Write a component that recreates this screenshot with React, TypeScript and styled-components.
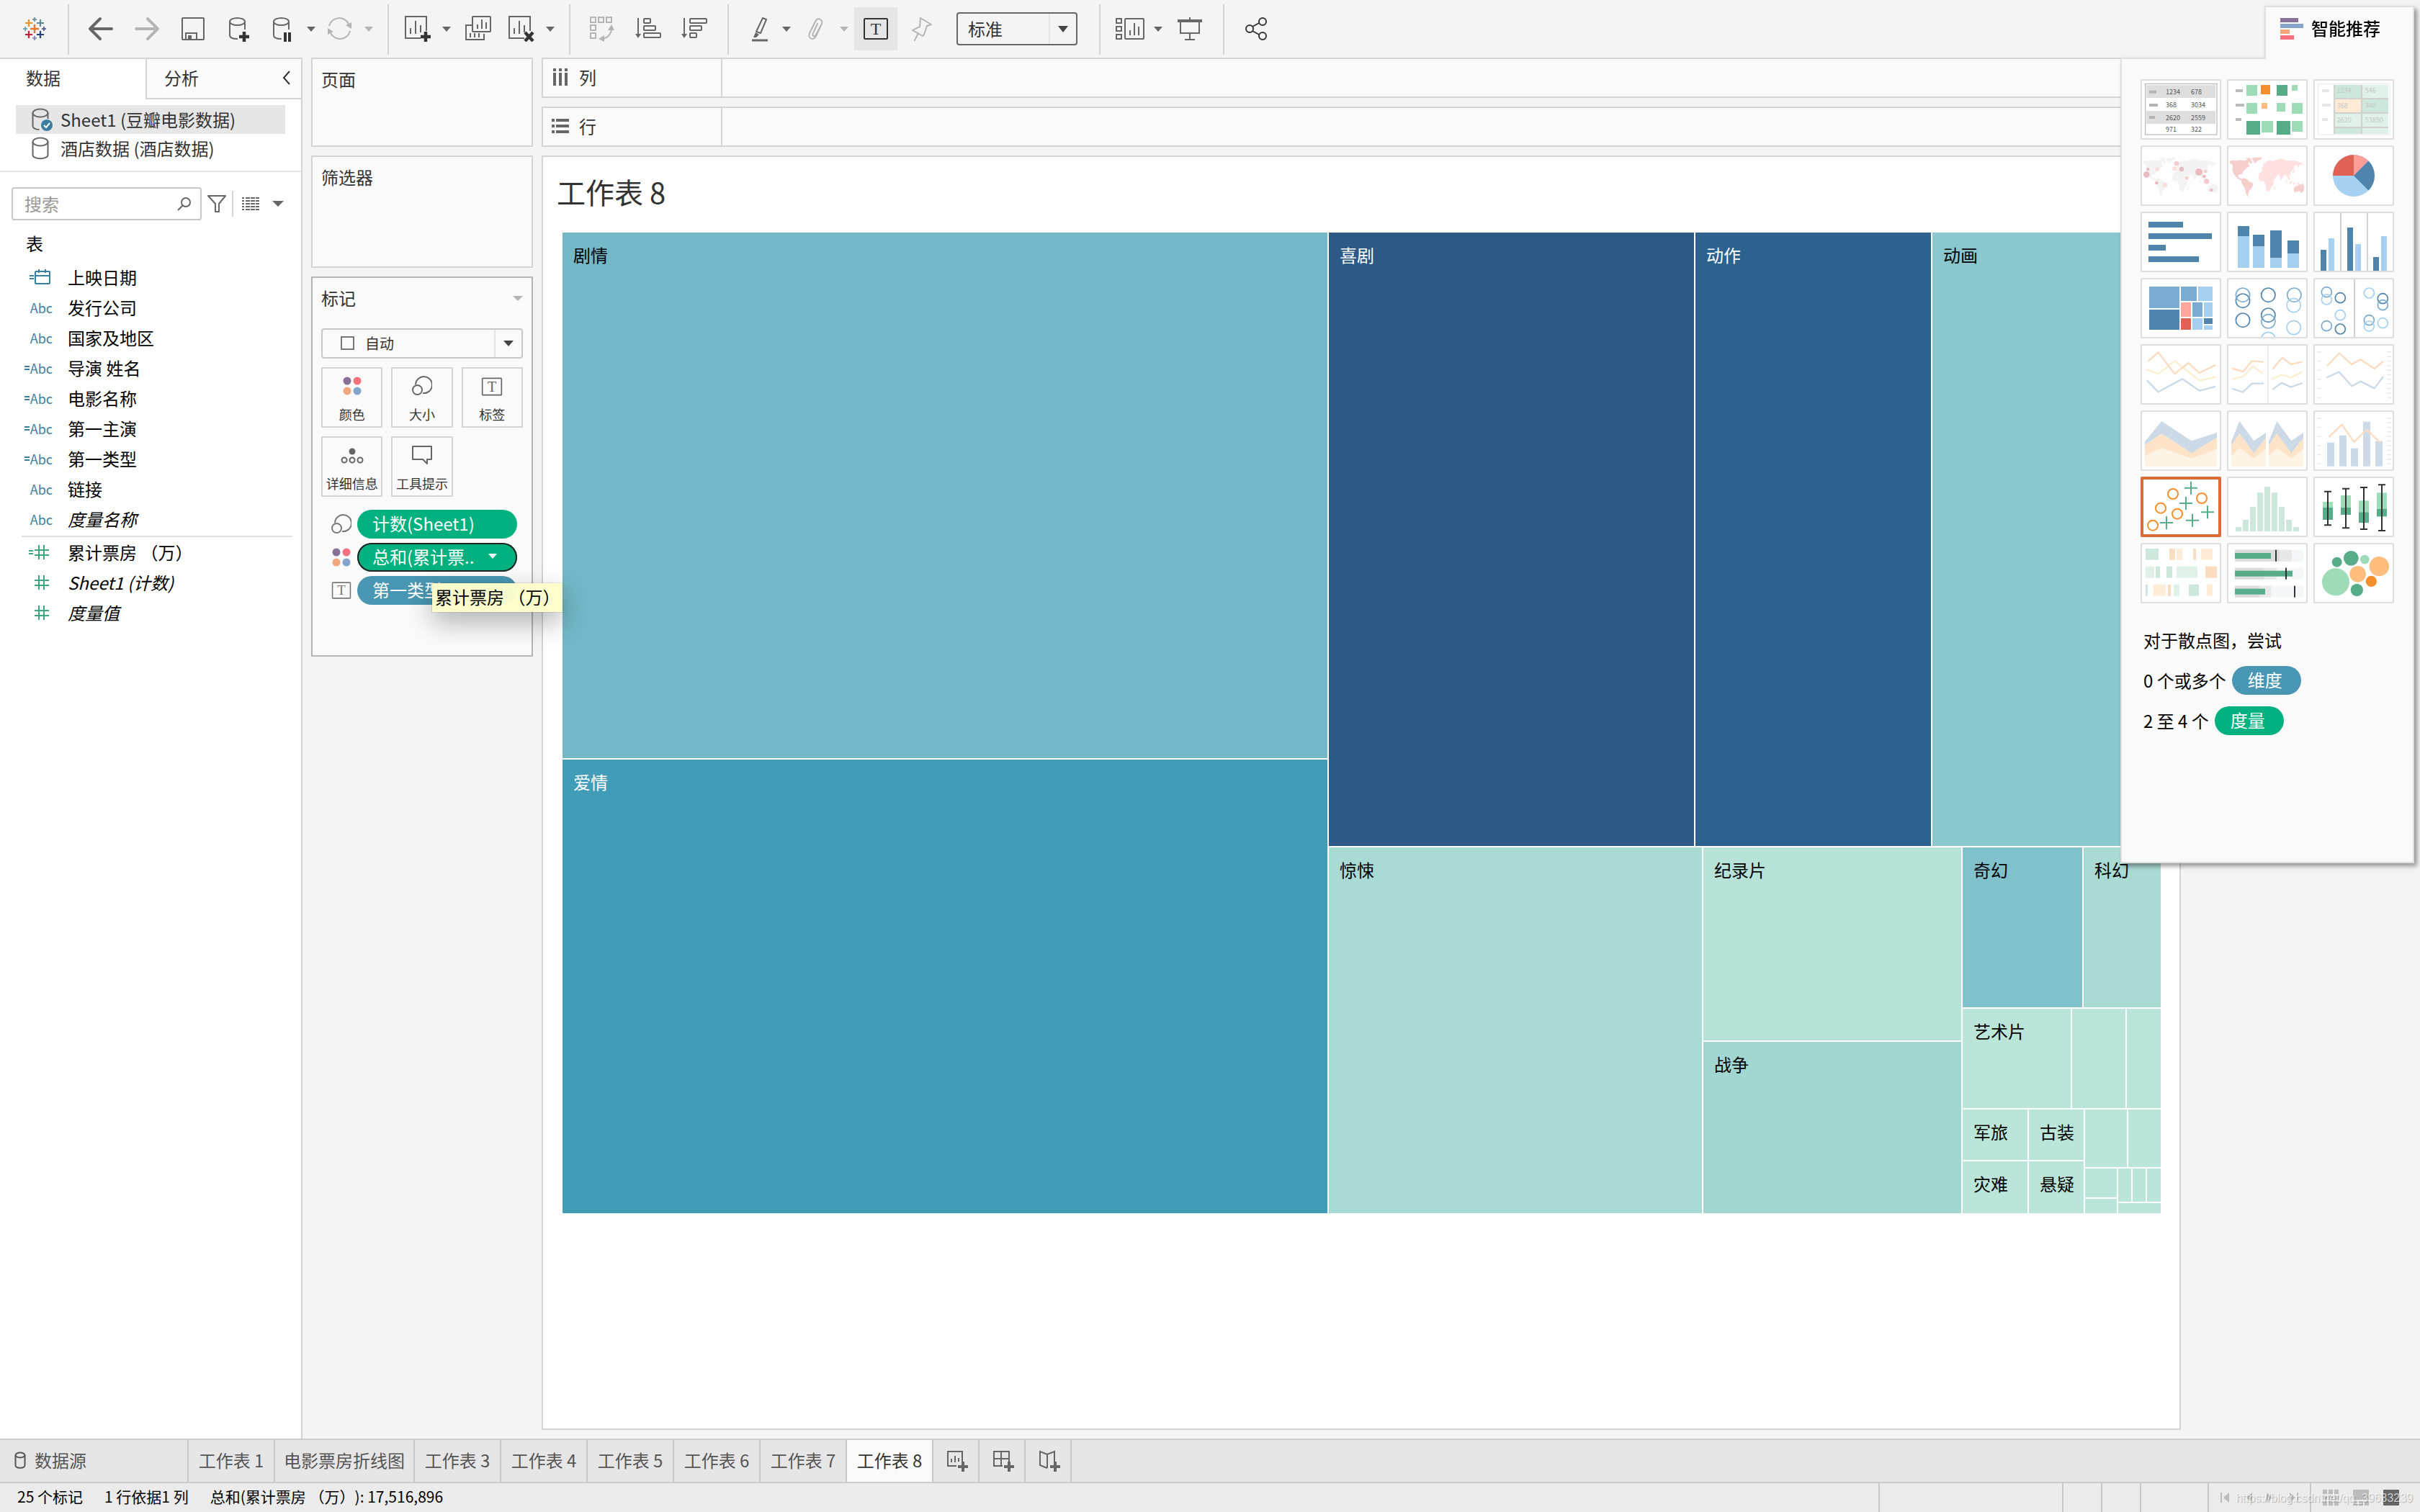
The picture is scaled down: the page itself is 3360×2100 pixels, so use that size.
import React from "react";
import styled, { createGlobalStyle, css } from "styled-components";

const Global = createGlobalStyle`
  *, *::before, *::after { box-sizing: border-box; }
  body { margin: 0; background: #f4f4f4; text-spacing-trim: space-all; }
  body, button, input, select {
    font-family: "Noto Sans CJK SC", "Noto Sans", sans-serif;
    font-size: 24px;
    line-height: 36px;
    color: #333;
  }
  button { border: 0; padding: 0; background: none; cursor: pointer; }
  h1, h2, p, ul { margin: 0; padding: 0; font-weight: 400; list-style: none; }
  svg { display: block; flex: none; }
`;

const line = "#d4d4d4";
const dark = "#4f84ad";
const mid = "#7babd0";
const light = "#a5d0f0";
const green = "#57ad8a";
const mint = "#9edcb8";

/* ---------- page frame ---------- */

const Page = styled.div`
  position: relative;
  display: flex;
  flex-direction: column;
  min-height: 100vh;
  overflow: hidden;
`;
const Main = styled.main`
  flex: 1;
  display: flex;
  gap: 12px;
`;

/* ---------- toolbar ---------- */

const Toolbar = styled.header`
  display: flex;
  align-items: stretch;
  height: 80px;
`;
const ToolGroup = styled.div<{ $last?: boolean }>`
  position: relative;
  display: flex;
  align-items: center;
  padding: 0 16px 0 12px;
  &::after {
    content: "";
    display: ${(p) => (p.$last ? "none" : "block")};
    position: absolute;
    right: 0;
    top: 6px;
    bottom: 4px;
    width: 2px;
    background: ${line};
  }
`;
const LogoGroup = styled(ToolGroup)`
  padding: 0;
  width: 96px;
  justify-content: center;
`;
const ToolButton = styled.button<{ $split?: boolean; $off?: boolean }>`
  display: grid;
  place-items: center;
  width: ${(p) => (p.$split ? 56 : 64)}px;
  height: 60px;
  color: ${(p) => (p.$off ? "#b4b4b4" : "#666")};
`;
const ActiveTool = styled(ToolButton)`
  width: 60px;
  margin: 0 2px;
  background: #e6e6e6;
  color: #333;
`;
const CaretButton = styled.button<{ $off?: boolean }>`
  display: grid;
  place-items: center;
  width: 24px;
  height: 60px;
  color: ${(p) => (p.$off ? "#b4b4b4" : "#666")};
`;
const SelectFrame = styled.label<{ $strong?: boolean }>`
  display: flex;
  align-items: stretch;
  border: 2px solid ${(p) => (p.$strong ? "#666" : "#c8c8c8")};
  border-radius: 4px;
  ${(p) =>
    p.$strong
      ? css`width: 168px; height: 46px; margin: 0 16px;`
      : css`width: 100%; height: 42px; margin: 24px 0 12px;`}
  select {
    flex: 1;
    min-width: 0;
    appearance: none;
    border: 0;
    outline: 0;
    background: transparent;
    color: #333;
    line-height: 32px;
    font-size: ${(p) => (p.$strong ? 24 : 20)}px;
    padding: 0 14px;
  }
`;
const SelectIcon = styled.span`
  display: grid;
  place-items: center;
  padding-left: 25px;
`;
const SelectCaret = styled.span`
  display: grid;
  place-items: center;
  width: 38px;
  border-left: 2px solid #e4e4e4;
  color: #444;
`;

const I = ({ children, w = 36, h = 36, vb }: any) => (
  <svg width={w} height={h} viewBox={vb || `0 0 ${w} ${h}`} fill="none" stroke="currentColor" strokeWidth="2" aria-hidden="true">
    {children}
  </svg>
);
const Caret = ({ w = 12, h = 7 }: { w?: number; h?: number }) => (
  <svg width={w} height={h} viewBox="0 0 12 7" preserveAspectRatio="none" aria-hidden="true">
    <path d="M0 0h12L6 7z" fill="currentColor" />
  </svg>
);
const Plus = ({ x, y, s, w, c }: any) => <path d={`M${x - s} ${y}h${s * 2}M${x} ${y - s}v${s * 2}`} stroke={c} strokeWidth={w} />;

const Logo = () => (
  <I>
    <Plus x={18} y={18} s={6} w={2.4} c="#e8762c" />
    <Plus x={10} y={10} s={5} w={2.2} c="#eb9129" />
    <Plus x={26} y={10} s={5} w={2.2} c="#5b879b" />
    <Plus x={10} y={26} s={5} w={2.2} c="#c72035" />
    <Plus x={26} y={26} s={5} w={2.2} c="#1f447e" />
    <Plus x={18} y={5} s={3} w={2} c="#7099a6" />
    <Plus x={18} y={31} s={3} w={2} c="#8b94b8" />
    <Plus x={5} y={18} s={3} w={2} c="#7ba5b3" />
    <Plus x={31} y={18} s={3} w={2} c="#5c6692" />
  </I>
);
const Arrow = ({ flip }: { flip?: boolean }) => (
  <I>
    <path transform={flip ? "matrix(-1 0 0 1 36 0)" : undefined} d="M17 4 3 18l14 14M3 18h30" strokeWidth="4" strokeLinecap="round" strokeLinejoin="round" />
  </I>
);
const Save = () => (
  <I>
    <rect x="3" y="3" width="30" height="30" rx="1" />
    <path d="M8 33v-9h15v9" />
    <path d="M11 27h5v6h-5z" fill="currentColor" stroke="none" />
  </I>
);
const Cylinder = () => (
  <>
    <ellipse cx="15.500" cy="8" rx="10.500" ry="5" />
    <path d="M5 8v19c0 3 4 5 11 5M26 8v11" />
  </>
);
const AddData = () => (<I><Cylinder /><Plus x={25} y={29} s={7} w={4.5} c="#333" /></I>);
const PauseData = () => (<I><g transform="translate(1 0)"><Cylinder /></g><path d="M22 23v13M28 23v13" stroke="#333" strokeWidth="4" /></I>);
const Refresh = () => (
  <I>
    <path d="M3 14a14.500 14.500 0 0 1 27-3M32 21a14.500 14.500 0 0 1-27 3" />
    <path d="M34 9v9l-8-5zM1 17v9l8-4z" fill="currentColor" stroke="none" />
  </I>
);
const SheetShape = () => <path d="M22 31H1V1h29v20M8 17v8M15 7v18M22 13v10" />;
const NewSheet = () => (<I><SheetShape /><Plus x={29} y={29} s={7} w={4.5} c="#333" /></I>);
const ClearSheet = () => (<I><SheetShape /><path d="M23 23l11 12M34 23 23 35" stroke="#333" strokeWidth="4.500" /></I>);
const Duplicate = () => (<I><rect x="10" y="1" width="25" height="21" rx="1" /><path d="M10 13H1v20h25v-8M17 12v6M23 5v13M29 9v9M7 24v6M13 24v6M19 24v6" /></I>);
const Swap = () => (
  <I>
    <rect x="2" y="2" width="7" height="7" /><rect x="13" y="2" width="7" height="7" /><rect x="24" y="2" width="7" height="7" />
    <rect x="2" y="13" width="7" height="7" /><rect x="2" y="24" width="7" height="7" />
    <path d="M31 17c0 8-5 14-13 15" />
    <path d="M26 20l5-8 4 8zM21 27l-8 5 8 4z" fill="currentColor" stroke="none" />
  </I>
);
const Sort = ({ desc }: { desc?: boolean }) => (
  <I>
    <path d="M4 3v24" /><path d="M0 25h8l-4 6z" fill="currentColor" stroke="none" />
    <rect x="12" y="4" width={desc ? 23 : 9} height="6" rx="1" />
    <rect x="12" y="14" width="16" height="6" rx="1" />
    <rect x="12" y="24" width={desc ? 9 : 23} height="6" rx="1" />
  </I>
);
const Highlighter = () => (<I><path d="M25 3l5 2-8 19-6-2z" strokeLinejoin="round" /><path d="M15 23l5 3-4 4h-4z" fill="currentColor" stroke="none" /><path d="M10 34h22" strokeWidth="3" /></I>);
const Clip = () => (<I><path d="M26 13 19 28c-3 7-12 4-9-4l8-16c3-7 11-3 9 3L19 26c-2 4-6 2-4-2l6-13" strokeLinecap="round" /></I>);
const TextBox = ({ w = 36, h = 36 }: any) => (
  <I w={w} h={h} vb="0 0 36 36">
    <rect x="2" y="4" width="32" height="28" rx="1" />
    <text x="18" y="26" textAnchor="middle" fontFamily="Liberation Serif, serif" fontSize="24" fill="currentColor" stroke="none">T</text>
  </I>
);
const Pin = () => (<I><path d="M16 3 31 12l-6 2-4 12-2 2-14-8 10-5zM13 24 8 34" strokeLinejoin="round" strokeLinecap="round" /></I>);
const CardsIcon = () => (<I w={42} h={36}><rect x="3" y="4" width="7" height="6" /><rect x="3" y="15" width="7" height="6" /><rect x="3" y="26" width="7" height="6" /><rect x="15" y="4" width="26" height="28" rx="1" /><path d="M22 20v7M28 10v17M34 15v12" /></I>);
const Present = () => (<I><path d="M18 2v4M5 9v15h26V9M18 24v9M11 33h14" /><path d="M1 7h34" strokeWidth="4" /></I>);
const Share = () => (<I><g stroke="#333"><circle cx="27" cy="8" r="5" /><circle cx="9" cy="18" r="5" /><circle cx="27" cy="28" r="5" /><path d="M13 15l9-5M13 21l9 5" /></g></I>);

/* ---------- data pane ---------- */

const DataPane = styled.aside`
  width: 420px;
  flex: none;
  background: #fff;
  border: solid ${line};
  border-width: 2px 2px 0 0;
`;
const PaneTabs = styled.div`
  display: flex;
  height: 56px;
`;
const PaneTab = styled.button<{ $active?: boolean }>`
  display: flex;
  align-items: center;
  text-align: left;
  ${(p) =>
    p.$active
      ? css`width: 202px; padding: 0 36px 4px;`
      : css`
          flex: 1;
          justify-content: space-between;
          padding: 0 14px 2px 24px;
          background: #fafafa;
          border: solid ${line};
          border-width: 0 0 2px 2px;
        `}
`;
const Sources = styled.ul`
  padding: 8px 22px 11px;
  border-bottom: 2px solid #e4e4e4;
`;
const Source = styled.li<{ $on?: boolean }>`
  background: ${(p) => (p.$on ? "#e6e6e6" : "transparent")};
  button {
    display: flex;
    align-items: center;
    gap: 8px;
    width: 100%;
    height: 40px;
    padding-left: 20px;
    white-space: nowrap;
  }
  svg { color: #666; }
`;
const SearchRow = styled.div`
  display: flex;
  align-items: center;
  padding: 21px 24px 11px 16px;
  color: #666;
`;
const SearchBox = styled.label`
  display: flex;
  align-items: center;
  width: 264px;
  height: 46px;
  padding: 0 12px 0 16px;
  border: 2px solid #c8c8c8;
  border-radius: 4px;
  margin-right: 8px;
  input {
    flex: 1;
    min-width: 0;
    border: 0;
    outline: 0;
    padding: 0;
    background: none;
    &::placeholder { color: #999; opacity: 1; }
  }
`;
const ViewTools = styled.div`
  display: flex;
  align-items: center;
  gap: 18px;
  height: 36px;
  margin-left: 8px;
  padding-left: 12px;
  border-left: 2px solid ${line};
`;
const TableTitle = styled.h2`
  padding: 0 36px;
  font-size: 24px;
  line-height: 42px;
  color: #000;
  margin-bottom: 5px;
`;
const Fields = styled.ul<{ $rule?: boolean }>`
  margin: 0 12px 0 30px;
  padding-bottom: 2px;
  ${(p) => p.$rule && css`border-top: 2px solid #e0e0e0;`}
`;
const Field = styled.li<{ $italic?: boolean }>`
  display: flex;
  align-items: center;
  height: 42px;
  color: #000;
  font-style: ${(p) => (p.$italic ? "italic" : "normal")};
`;
const FieldType = styled.span<{ $measure?: boolean }>`
  display: flex;
  align-items: center;
  justify-content: flex-end;
  width: ${(p) => (p.$measure ? 39 : 43)}px;
  margin-right: ${(p) => (p.$measure ? 25 : 21)}px;
  font-size: 18px;
  font-style: normal;
  color: ${(p) => (p.$measure ? "#3fa67c" : "#3a7fa0")};
`;

const DbIcon = ({ checked }: { checked?: boolean }) => (
  <I w={34} h={34}>
    <ellipse cx="14" cy="8" rx="10.500" ry="5.500" />
    <path d={checked ? "M3.500 8v18c0 3 4 5 9 5M24.500 8v8" : "M3.500 8v18c0 7 21 7 21 0V8"} />
    {checked && (<><circle cx="23" cy="25" r="8" fill="#3a7fa0" stroke="none" /><path d="M19 25l3 3 5-6" stroke="#fff" /></>)}
  </I>
);
const Calendar = () => (<I w={32} h={24}><path d="M0 10h6M0 14h6" /><rect x="8" y="4" width="20" height="17" rx="1" /><path d="M8 10h20M13 1v5M22 1v5" /></I>);
const Hash = ({ calc }: { calc?: boolean }) => (<I w={30} h={22}>{calc && <path d="M1 9h6M1 13h6" />}<path d="M9 8h20M9 15h20M15 1v20M22 1v20" /></I>);
const Eq = () => (<I w={8} h={8}><path d="M0 2h7M0 6h7" /></I>);

const dims: [string, string, boolean?][] = [
  ["date", "上映日期"],
  ["abc", "发行公司"],
  ["abc", "国家及地区"],
  ["calc", "导演 姓名"],
  ["calc", "电影名称"],
  ["calc", "第一主演"],
  ["calc", "第一类型"],
  ["abc", "链接"],
  ["abc", "度量名称", true],
];

/* ---------- shelves and marks ---------- */

const Cards = styled.section`
  display: flex;
  flex-direction: column;
  gap: 12px;
  width: 308px;
  flex: none;
`;
const Card = styled.div<{ $h: number; $strong?: boolean }>`
  min-height: ${(p) => p.$h}px;
  padding: 10px 12px 12px;
  background: #fafafa;
  border: 2px solid ${(p) => (p.$strong ? "#b4b4b4" : line)};
`;
const CardHead = styled.div`
  display: flex;
  justify-content: space-between;
  align-items: center;
  color: #b4b4b4;
  h2 { font-size: 24px; color: #333; }
`;
const MarkGrid = styled.div`
  display: grid;
  grid-template-columns: repeat(3, 1fr);
  gap: 12px;
`;
const MarkButton = styled.button`
  display: flex;
  flex-direction: column;
  align-items: center;
  justify-content: space-between;
  height: 84px;
  padding: 10px 0 4px;
  border: 2px solid ${line};
  font-size: 18px;
  line-height: 26px;
  white-space: nowrap;
  color: #333;
  svg { color: #666; }
`;
const Pills = styled.ul`
  display: flex;
  flex-direction: column;
  gap: 6px;
  padding: 18px 8px 0 14px;
`;
const PillRow = styled.li`
  position: relative;
  display: flex;
  align-items: center;
  gap: 8px;
  color: #777;
`;
const Pill = styled.button<{ $dim?: boolean; $on?: boolean }>`
  display: flex;
  align-items: center;
  justify-content: space-between;
  flex: 1;
  height: 40px;
  padding: 0 28px 3px 21px;
  border-radius: 20px;
  background: ${(p) => (p.$dim ? "#4996b2" : "#00b180")};
  color: #fff;
  white-space: nowrap;
  box-shadow: ${(p) => (p.$on ? "inset 0 0 0 2px #222" : "none")};
`;
const Tooltip = styled.div`
  position: absolute;
  z-index: 3;
  left: 140px;
  top: 10px;
  padding: 0 4px 2px;
  line-height: 38px;
  white-space: nowrap;
  color: #000;
  background: rgba(255, 255, 204, 0.96);
  box-shadow: 0 0 1px rgba(0, 0, 0, 0.5), 0 14px 36px rgba(0, 0, 0, 0.3);
`;
const ColorDots = () => (
  <I w={28} h={28}>
    <g stroke="none"><circle cx="7" cy="7" r="5.500" fill="#877199" /><circle cx="21" cy="7" r="5.500" fill="#f9727f" /><circle cx="7" cy="21" r="5.500" fill="#f2a67c" /><circle cx="21" cy="21" r="5.500" fill="#85a6cc" /></g>
  </I>
);
const SizeIcon = () => (<I w={28} h={28}><path d="M5 12a11.500 11.500 0 1 1 10 12" /><circle cx="7.500" cy="19.500" r="6.500" /></I>);
const DetailIcon = () => (<I w={32} h={28}><circle cx="16" cy="9" r="4.500" fill="currentColor" stroke="none" /><circle cx="5" cy="21" r="3.500" /><circle cx="16" cy="21" r="3.500" /><circle cx="27" cy="21" r="3.500" /></I>);
const TipIcon = () => (<I w={30} h={28}><path d="M2 2h26v18h-6v6l-6-6H2z" strokeLinejoin="round" /></I>);

/* ---------- worksheet ---------- */

const Workspace = styled.section`
  flex: 1;
  min-width: 0;
  display: flex;
  flex-direction: column;
  gap: 12px;
  padding: 0 24px 12px 0;
`;
const Shelf = styled.div`
  display: flex;
  height: 56px;
  background: #fafafa;
  border: 2px solid ${line};
`;
const ShelfName = styled.div`
  display: flex;
  align-items: center;
  gap: 14px;
  width: 249px;
  padding: 0 0 2px 12px;
  border-right: 2px solid ${line};
  color: #666;
  span { color: #333; }
`;
const Sheet = styled.article`
  flex: 1;
  display: flex;
  flex-direction: column;
  margin-right: 308px;
  padding: 18px 26px 0 27px;
  background: #fff;
  border: 2px solid ${line};
`;
const SheetTitle = styled.h1`
  font-size: 40px;
  line-height: 60px;
  margin: 0 -8px 27px;
`;
const TreeMap = styled.div`
  display: flex;
  flex: 1362 1 0;
`;
const SheetFoot = styled.div`
  flex: 299 1 0;
`;
const Split = styled.div<{ $dir: "row" | "column"; $size: number }>`
  display: flex;
  flex: ${(p) => p.$size} 1 0;
  flex-direction: ${(p) => p.$dir};
  min-width: 0;
  min-height: 0;
  gap: 2px;
`;
const Tile = styled.div<{ $size: number; $fill: string; $light?: boolean }>`
  flex: ${(p) => p.$size} 1 0;
  min-width: 0;
  min-height: 0;
  background: ${(p) => p.$fill};
  color: ${(p) => (p.$light ? "#fff" : "#000")};
  white-space: nowrap;
  overflow: hidden;
  span { display: block; padding: 13px 0 0 15px; }
`;

type Node = { size: number; dir?: "row" | "column"; kids?: Node[]; fill?: string; name?: string; light?: boolean };
const g = (size: number, dir: "row" | "column", ...kids: Node[]): Node => ({ size, dir, kids });
const t = (size: number, name = "", fill = "#bce5da", isLight = false): Node => ({ size, name, fill, light: isLight });

const genres: Node = g(1, "row",
  g(1062, "column", t(730, "剧情", "#72b8c6"), t(630, "爱情", "#419cb7", true)),
  g(1155, "column",
    g(852, "row", t(507, "喜剧", "#2c5985", true), t(327, "动作", "#2d618e", true), t(317, "动画", "#8ac7ce")),
    g(508, "row",
      t(518, "惊悚", "#a9dad4"),
      g(358, "column", t(268, "纪录片", "#b7e2d8"), t(238, "战争", "#a2d6d1")),
      g(275, "column",
        g(222, "row", t(166, "奇幻", "#80c1cb"), t(107, "科幻", "#a9dad4")),
        g(138, "row", t(150, "艺术片"), t(74), t(47)),
        g(144, "row",
          g(90, "column", t(70, "军旅"), t(72, "灾难")),
          g(76, "column", t(70, "古装"), t(72, "悬疑")),
          g(105, "column",
            g(80, "row", t(58), t(45)),
            g(62, "row",
              g(44, "column", t(40), t(20)),
              g(59, "column", g(46, "row", t(18), t(18), t(19)), t(14))))))))
);
const renderNode = (n: Node, key: React.Key = 0): React.ReactNode =>
  n.kids ? (
    <Split key={key} $dir={n.dir!} $size={n.size}>{n.kids.map((k, i) => renderNode(k, i))}</Split>
  ) : (
    <Tile key={key} $size={n.size} $fill={n.fill!} $light={n.light}>{n.name && <span>{n.name}</span>}</Tile>
  );

/* ---------- show me ---------- */

const ShowMe = styled.aside`
  position: absolute;
  z-index: 4;
  top: 8px;
  right: 8px;
  width: 408px;
  display: flex;
  flex-direction: column;
  align-items: flex-end;
  filter: drop-shadow(4px 4px 3px rgba(0, 0, 0, 0.4));
`;
const ShowMeTab = styled.button`
  position: relative;
  z-index: 1;
  display: flex;
  align-items: flex-start;
  gap: 11px;
  width: 208px;
  height: 74px;
  padding: 11px 0 0 20px;
  background: #fafafa;
  border: solid #dedede;
  border-width: 2px 2px 0;
  font-weight: 500;
  color: #000;
`;
const ShowMeBody = styled.div`
  width: 100%;
  height: 1119px;
  margin-top: -2px;
  padding: 28px 26px;
  background: #fafafa;
  border: 2px solid #dedede;
`;
const Thumbs = styled.div`
  display: grid;
  grid-template-columns: repeat(3, 112px);
  gap: 8px;
  margin-bottom: 31px;
`;
const Thumb = styled.button<{ $on?: boolean }>`
  height: 84px;
  background: #fff;
  border: 2px solid ${(p) => (p.$on ? "#dc6b37" : "#dedede")};
  border-radius: 2px;
  box-shadow: ${(p) => (p.$on ? "inset 0 0 0 2px #dc6b37" : "none")};
  text { font-size: 27px; }
`;
const Hint = styled.p`
  display: flex;
  align-items: center;
  gap: 8px;
  height: 40px;
  margin: 0 0 16px 4px;
  color: #000;
`;
const HintPill = styled.span<{ $dim?: boolean }>`
  padding: 0 26px 2px 22px;
  line-height: 38px;
  border-radius: 20px;
  color: #fff;
  background: ${(p) => (p.$dim ? "#4996b2" : "#00b180")};
`;

const R = ({ d, c }: { d: number[][]; c: string }) => (<>{d.map((r, i) => <rect key={i} x={r[0]} y={r[1]} width={r[2]} height={r[3]} fill={c} />)}</>);
const C = ({ d, r, c, w = 5 }: { d: number[][]; r: number; c: string; w?: number }) => (<>{d.map((p, i) => <circle key={i} cx={p[0]} cy={p[1]} r={r} fill="none" stroke={c} strokeWidth={w} />)}</>);
const D = ({ d, c }: { d: number[][]; c: string }) => (<>{d.map((p, i) => <circle key={i} cx={p[0]} cy={p[1]} r={p[2]} fill={c} />)}</>);
const L = ({ p, c, w = 7 }: { p: string; c: string; w?: number }) => <polyline points={p} fill="none" stroke={c} strokeWidth={w} strokeLinecap="round" strokeLinejoin="round" />;
const T = ({ d, c }: { d: [number, number, string][]; c: string }) => (<g fill={c}>{d.map((p, i) => <text key={i} x={p[0]} y={p[1]}>{p[2]}</text>)}</g>);
const Ticks = () => (
  <>
    <R c="#ececec" d={[0, 1, 2, 3, 4, 5].map((i) => [9, 24 + i * 38, 18, 5])} />
    <R c="#ececec" d={[0, 1, 2, 3, 4, 5, 6, 7, 8, 9, 10].map((i) => [300, 24 + i * 19, 18, 5])} />
  </>
);
const World = ({ west, east }: { west: string; east: string }) => (
  <>
    <path fill={west} d="M6 60l10-4 18 2 14-3 20 3 12-7 18-2-4 8 8 8-10 4-6-6-6 8 10 8-12 8-10 8-8 10-4 10-8-2-8 6 4 10 8 2 8 12-10-4-12-8-10-10-8-14-4-14 2-12-4-10-8-2zM70 48l16-3 6 3-10 4zM98 46l20-2 22 1-6 9-14 4-8 11-7-8zM54 134l10-4 14 6 8 8 18 8-2 10-8 14-8 8-4 14 2 9-6-2-6-16-4-18-9-12-5-14zM272 172l10-10 10-2 6-6 6 4 4-8 8 16-2 18-10 8-8-8-22 6z" />
    <path fill={east} d="M138 86l8-4 2-12 12-10 14-4 10 4 16-6 20-5 22 7 34 1 24 8 10 2-4 8-10 0-4 12-6-12-12 4-4 12-6 10-6 6 2 8-8 6 4 12-2 8-8-14-8-10-6 0-8 14-2 6-6-2-4-16-10-4 0 6-10 8-12-10-8-12-12-2-8 6-6-4zM130 108l14-8 12-2 8 6 14 4 6 16 14 2-10 16 0 14-8 10-8 18-10 2-6-14-2-16-6-14-14 2-10-14zM190 168l6-6-2 14-4 2zM266 78l8 4-2 12 6 6-8 12-4-6 6-8zM238 138l12 12-2 4-12-12zM254 146l12-6-2 12-8 2zM268 152l6-6 4 8-6 4zM282 148l14 6 6 8-14-6zM144 74l6-8 2 10-6 6z" />
  </>
);
const areas = (xs: number[]) => {
  const poly = (ys: number[]) => `${xs.map((x, i) => `${x},${ys[i]}`).join(" ")} ${xs[3]},227 ${xs[0]},227`;
  return (
    <g key={xs[0]}>
      <polygon points={poly([124, 39, 121, 87])} fill="#ccdae8" />
      <polygon points={poly([138, 90, 171, 107])} fill="#fde4c8" />
      <polygon points={poly([183, 151, 194, 155])} fill="#fef4e6" />
    </g>
  );
};
const boxes = [[33, 99, 123, 174, 56, 196], [108, 72, 123, 153, 44, 208], [183, 94, 142, 186, 39, 213], [258, 61, 129, 160, 28, 219]];

const thumbs: [string, React.ReactNode][] = [
  ["文本表", <>
    <rect x="14" y="13" width="298" height="212" fill="none" stroke="#aaa" strokeWidth="3" />
    <R c="#dedede" d={[[18, 18, 288, 54], [18, 126, 288, 54]]} />
    <R c="#b4b4b4" d={[[30, 41, 30, 12], [30, 96, 36, 12], [30, 147, 24, 12]]} />
    <T c="#555" d={[[99, 56, "1234"], [204, 56, "678"], [99, 110, "368"], [204, 110, "3034"], [99, 164, "2620"], [204, 164, "2559"], [99, 212, "971"], [204, 212, "322"]]} />
  </>],
  ["热图", <>
    <R c="#bbb" d={[[30, 36, 30, 12], [30, 96, 36, 12], [30, 156, 24, 12]]} />
    <R c={mint} d={[[75, 18, 45, 45], [264, 18, 24, 24], [75, 93, 45, 45], [201, 93, 36, 36], [264, 93, 45, 45], [138, 168, 48, 48], [264, 168, 45, 45]]} />
    <R c={green} d={[[201, 18, 45, 45], [75, 168, 57, 57], [201, 168, 57, 57]]} />
    <R c="#f58f2c" d={[[135, 18, 39, 39]]} /><R c="#ffbd7e" d={[[138, 93, 24, 24]]} />
  </>],
  ["突出显示表", <>
    <rect x="14" y="13" width="298" height="212" fill="none" stroke="#e8e8e8" strokeWidth="3" />
    <R c="#e6e6e6" d={[[30, 36, 30, 12], [30, 96, 36, 12], [30, 156, 24, 12]]} />
    <R c="#d0d0d0" d={[[78, 18, 228, 204]]} />
    <R c="#cde7dc" d={[[84, 18, 108, 54], [198, 78, 108, 54], [84, 198, 108, 24]]} />
    <R c="#e0f2e7" d={[[198, 18, 108, 54], [84, 138, 108, 54], [198, 138, 108, 54], [198, 198, 108, 24]]} />
    <R c="#fdebd6" d={[[84, 78, 108, 54]]} />
    <T c="#c4c9c6" d={[[92, 51, "1234"], [209, 51, "546"], [92, 114, "368"], [209, 114, "340"], [92, 174, "2620"], [209, 174, "53890"]]} />
  </>],
  ["符号地图", <>
    <World west="#f3f3f3" east="#f3f3f3" />
    <D c="#eabac1" d={[[19, 115, 13], [25, 93, 7], [165, 93, 10], [61, 150, 7], [237, 105, 15], [259, 123, 7], [289, 180, 7]]} />
    <D c="#f4cccc" d={[[144, 69, 10], [187, 129, 7], [265, 102, 7], [269, 143, 11]]} />
    <D c="#fbdede" d={[[63, 93, 9], [135, 91, 9], [96, 159, 10]]} />
  </>],
  ["地图", <World west="#f6cfcd" east="#ffe0e0" />],
  ["饼图", <>
    <circle cx="162" cy="120" r="87" fill={light} />
    <path d="M162 120V33A87 87 0 0 0 75 120z" fill="#e06255" />
    <path d="M162 120V33A87 87 0 0 1 223.500 58.500z" fill="#ff9d98" />
    <path d="M162 120L223.500 58.500A87 87 0 0 1 223.500 181.500z" fill={dark} />
  </>],
  ["水平条", <R c={dark} d={[[27, 36, 144, 24], [27, 84, 264, 24], [27, 132, 72, 24], [27, 180, 210, 24]]} />],
  ["堆叠条", <>
    <R c={dark} d={[[39, 54, 48, 42], [102, 90, 48, 48], [174, 72, 48, 114], [246, 114, 48, 54]]} />
    <R c={light} d={[[39, 96, 48, 132], [102, 138, 48, 90], [174, 186, 48, 42], [246, 168, 48, 60]]} />
  </>],
  ["并排条", <>
    <R c="#d2d2d2" d={[[105, 0, 6, 240], [216, 0, 6, 240]]} />
    <R c={dark} d={[[24, 153, 24, 87], [135, 60, 24, 180], [243, 183, 24, 57]]} />
    <R c={light} d={[[57, 105, 24, 135], [168, 129, 24, 111], [276, 96, 24, 144]]} />
  </>],
  ["树状图", <>
    <R c={mid} d={[[30, 30, 126, 90], [162, 30, 66, 60], [210, 96, 42, 60]]} />
    <R c={dark} d={[[30, 126, 126, 84], [258, 162, 36, 24]]} />
    <R c={light} d={[[234, 30, 60, 60], [258, 96, 36, 60], [210, 162, 42, 48], [258, 192, 36, 18]]} />
    <R c="#ffa79f" d={[[162, 96, 42, 60]]} /><R c="#e06255" d={[[162, 162, 42, 48]]} />
  </>],
  ["圆视图", <>
    <C r={29} c={dark} d={[[60, 89], [60, 170], [166, 65], [166, 149]]} />
    <C r={29} c={mid} d={[[60, 65], [166, 175], [274, 65]]} />
    <C r={29} c={light} d={[[166, 249], [272, 108], [272, 201]]} />
  </>],
  ["并排圆", <>
    <R c="#d2d2d2" d={[[162, 0, 6, 240]]} />
    <C r={21} c={dark} d={[[106, 77], [106, 207], [283, 80]]} />
    <C r={21} c={mid} d={[[49, 53], [49, 194], [283, 107], [226, 170]]} />
    <C r={21} c={light} d={[[49, 84], [106, 149], [226, 57], [226, 195], [283, 182]]} />
  </>],
  ["连续线", <>
    <L c="#fcefd0" p="22,100 68,118 136,64 240,146 304,131" />
    <L c="#fbdcc0" p="28,63 68,28 136,118 194,72 238,114 304,82" />
    <L c="#ccdae8" p="22,146 68,193 168,139 240,188 304,171" />
  </>],
  ["离散线", <>
    <R c="#ececec" d={[[162, 0, 6, 240]]} />
    <L c="#fcefd0" p="18,139 62,129 102,86 140,114" /><L c="#fcefd0" p="182,139 222,121 260,133 306,110" />
    <L c="#fbdcc0" p="18,96 62,108 98,64 144,68" /><L c="#fbdcc0" p="186,96 224,50 260,78 306,68" />
    <L c="#ccdae8" p="18,180 60,194 98,158 144,158" /><L c="#ccdae8" p="186,181 222,155 260,173 306,157" />
  </>],
  ["双线", <><Ticks /><L c="#fbdcc0" p="53,82 102,32 154,78 190,58 248,96 282,67" /><L c="#ccdae8" p="51,132 101,110 154,169 190,149 248,178 283,132" /></>],
  ["连续区域", areas([12, 82, 206, 312])],
  ["离散区域", [areas([12, 46, 106, 156]), areas([168, 202, 262, 312])]],
  ["双组合", <>
    <Ticks />
    <R c="#ccdae8" d={[[51, 128, 30, 99], [102, 98, 30, 129], [150, 152, 30, 75], [201, 41, 30, 186], [252, 122, 30, 105]]} />
    <L c="#fbdcc0" p="60,103 113,53 163,126 216,74 270,126" />
  </>],
  ["散点图", <>
    <C r={21} c="#f58f2c" w={6} d={[[129, 66], [249, 84], [78, 125], [147, 149], [45, 197]]} />
    {[[204, 41], [183, 105], [273, 142], [210, 176], [102, 186]].map((p, i) => <Plus key={i} x={p[0]} y={p[1]} s={27} w={6} c={green} />)}
  </>],
  ["直方图", <R c="#cde7dc" d={[204, 174, 120, 61, 36, 61, 120, 174, 204].map((y, i) => [30 + i * 30, y, 24, 222 - y])} />],
  ["盒须图", <>
    {boxes.map(([x, a, b, c, lo, hi]) => (
      <g key={x}>
        <R c={mint} d={[[x, a, 42, b - a]]} /><R c={green} d={[[x, b, 42, c - b]]} />
        <path d={`M${x + 21} ${lo}V${hi}M${x + 6} ${lo}h30M${x + 6} ${hi}h30`} stroke="#333" strokeWidth="6" />
      </g>
    ))}
  </>],
  ["甘特图", <>
    <R c="#cde7dc" d={[[15, 18, 54, 47], [57, 92, 18, 48], [102, 92, 24, 48], [15, 167, 9, 48], [195, 167, 42, 48]]} />
    <R c="#fbdcc0" d={[[114, 18, 24, 47], [213, 18, 12, 47], [264, 92, 48, 48], [108, 167, 12, 48]]} />
    <R c="#feebd8" d={[[144, 18, 24, 47], [246, 18, 48, 47], [48, 167, 51, 48], [270, 167, 24, 48]]} />
    <R c="#e0f2e7" d={[[15, 92, 36, 48], [144, 92, 87, 48], [132, 167, 24, 48]]} />
  </>],
  ["标靶图", <>
    <R c="#f5f6f8" d={[[27, 23, 285, 48], [27, 98, 285, 48], [27, 173, 285, 48]]} />
    <R c="#e8e8e8" d={[[27, 23, 237, 48], [27, 98, 174, 48], [27, 173, 150, 48]]} />
    <R c="#dcdcdc" d={[[27, 23, 186, 48], [27, 98, 120, 48], [27, 173, 102, 48]]} />
    <R c={green} d={[[27, 36, 150, 24], [27, 110, 240, 24], [27, 185, 126, 24]]} />
    <R c="#333" d={[[195, 23, 6, 48], [237, 98, 6, 48], [273, 173, 6, 48]]} />
  </>],
  ["填充气泡图", <>
    <D c={mint} d={[[87, 157, 57], [208, 63, 19]]} />
    <D c={green} d={[[92, 74, 21], [151, 58, 31], [175, 190, 26]]} />
    <D c="#ffbd7e" d={[[179, 124, 34], [268, 92, 41]]} /><D c="#f58f2c" d={[[235, 154, 23]]} />
  </>],
];

/* ---------- footer ---------- */

const SheetTabs = styled.nav`
  display: flex;
  height: 62px;
  background: #e6e6e6;
  border: solid #ccc;
  border-width: 2px 0;
`;
const SheetTab = styled.button<{ $on?: boolean }>`
  min-width: 120px;
  padding: 0 12px 2px;
  border-right: 2px solid #c8c8c8;
  background: ${(p) => (p.$on ? "#fafafa" : "transparent")};
  color: ${(p) => (p.$on ? "#333" : "#555")};
  white-space: nowrap;
`;
const SourceTab = styled(SheetTab)`
  display: flex;
  align-items: center;
  gap: 12px;
  width: 262px;
  padding: 0 20px 2px;
`;
const AddTab = styled(SheetTab)`
  display: grid;
  place-items: center;
  min-width: 64px;
  padding: 0 0 0 4px;
  color: #666;
`;
const Status = styled.footer`
  display: flex;
  align-items: stretch;
  height: 40px;
  background: #ebebeb;
  font-size: 21px;
  line-height: 37px;
  color: #000;
`;
const Facts = styled.div`
  flex: 1;
  display: flex;
  gap: 30px;
  padding-left: 24px;
  white-space: nowrap;
`;
const StatusCell = styled.div<{ $w: number }>`
  display: flex;
  align-items: center;
  gap: 20px;
  width: ${(p) => p.$w}px;
  padding-left: 16px;
  border-left: 2px solid #c8c8c8;
  button { color: #bbb; }
`;
const Watermark = styled.div`
  position: absolute;
  z-index: 5;
  right: 10px;
  bottom: 8px;
  font: 16px/22px "Liberation Sans", sans-serif;
  color: rgba(255, 255, 255, 0.7);
  text-shadow: 1px 1px 1px rgba(0, 0, 0, 0.25);
`;
const NavIcon = ({ flip, end }: { flip?: boolean; end?: boolean }) => (
  <I w={12} h={14}><g transform={flip ? "matrix(-1 0 0 1 12 0)" : undefined}>{end && <path d="M1 0v14" />}<path d="M12 0v14L4 7z" fill="currentColor" stroke="none" /></g></I>
);

export default function App() {
  return (
    <Page>
      <Global />
      <Toolbar>
        <LogoGroup><Logo /></LogoGroup>
        <ToolGroup>
          <ToolButton aria-label="撤消"><Arrow /></ToolButton>
          <ToolButton $off aria-label="重做"><Arrow flip /></ToolButton>
          <ToolButton aria-label="保存"><Save /></ToolButton>
          <ToolButton aria-label="新建数据源"><AddData /></ToolButton>
          <ToolButton $split aria-label="暂停自动更新"><PauseData /></ToolButton>
          <CaretButton aria-label="更新选项"><Caret /></CaretButton>
          <ToolButton $split $off aria-label="运行更新"><Refresh /></ToolButton>
          <CaretButton $off aria-label="运行选项"><Caret /></CaretButton>
        </ToolGroup>
        <ToolGroup>
          <ToolButton $split aria-label="新建工作表"><NewSheet /></ToolButton>
          <CaretButton aria-label="新建选项"><Caret /></CaretButton>
          <ToolButton aria-label="复制"><Duplicate /></ToolButton>
          <ToolButton $split aria-label="清除工作表"><ClearSheet /></ToolButton>
          <CaretButton aria-label="清除选项"><Caret /></CaretButton>
        </ToolGroup>
        <ToolGroup>
          <ToolButton $off aria-label="交换行和列"><Swap /></ToolButton>
          <ToolButton aria-label="升序排序"><Sort /></ToolButton>
          <ToolButton aria-label="降序排序"><Sort desc /></ToolButton>
        </ToolGroup>
        <ToolGroup>
          <ToolButton $split aria-label="突出显示"><Highlighter /></ToolButton>
          <CaretButton aria-label="突出显示选项"><Caret /></CaretButton>
          <ToolButton $split $off aria-label="组成员"><Clip /></ToolButton>
          <CaretButton $off aria-label="组选项"><Caret /></CaretButton>
          <ActiveTool aria-label="显示标记标签"><TextBox /></ActiveTool>
          <ToolButton $off aria-label="固定轴"><Pin /></ToolButton>
          <SelectFrame $strong>
            <select aria-label="适合"><option>标准</option></select>
            <SelectCaret><Caret w={14} h={9} /></SelectCaret>
          </SelectFrame>
        </ToolGroup>
        <ToolGroup>
          <ToolButton $split aria-label="显示卡"><CardsIcon /></ToolButton>
          <CaretButton aria-label="显示卡选项"><Caret /></CaretButton>
          <ToolButton aria-label="演示模式"><Present /></ToolButton>
        </ToolGroup>
        <ToolGroup $last>
          <ToolButton aria-label="共享"><Share /></ToolButton>
        </ToolGroup>
      </Toolbar>

      <Main>
        <DataPane>
          <PaneTabs>
            <PaneTab $active>数据</PaneTab>
            <PaneTab>分析<I w={12} h={20}><path d="M10 1 2 10l8 9" /></I></PaneTab>
          </PaneTabs>
          <Sources>
            <Source $on><button><DbIcon checked />Sheet1 (豆瓣电影数据)</button></Source>
            <Source><button><DbIcon />酒店数据 (酒店数据)</button></Source>
          </Sources>
          <SearchRow>
            <SearchBox>
              <input placeholder="搜索" aria-label="搜索" />
              <I w={20} h={20}><circle cx="12" cy="8" r="6" /><path d="M8 12l-7 7" /></I>
            </SearchBox>
            <button aria-label="筛选"><I w={26} h={26}><path d="M1 2h24l-9 11v11h-5V13z" stroke="#666" strokeLinejoin="round" /></I></button>
            <ViewTools>
              <I w={24} h={20}><path d="M0 2h3M0 6h3M0 10h3M0 14h3M0 18h3M5 2h19M5 6h19M5 10h19M5 14h19M5 18h19" strokeDasharray="6 1" /></I>
              <Caret w={16} h={8} />
            </ViewTools>
          </SearchRow>
          <TableTitle>表</TableTitle>
          <Fields>
            {dims.map(([kind, name, italic]) => (
              <Field key={name} $italic={italic}>
                <FieldType>{kind === "date" ? <Calendar /> : <>{kind === "calc" && <Eq />}Abc</>}</FieldType>
                {name}
              </Field>
            ))}
          </Fields>
          <Fields $rule>
            <Field><FieldType $measure><Hash calc /></FieldType>累计票房 （万）</Field>
            <Field $italic><FieldType $measure><Hash /></FieldType>Sheet1 (计数)</Field>
            <Field $italic><FieldType $measure><Hash /></FieldType>度量值</Field>
          </Fields>
        </DataPane>

        <Cards>
          <Card $h={124}><CardHead><h2>页面</h2></CardHead></Card>
          <Card $h={156}><CardHead><h2>筛选器</h2></CardHead></Card>
          <Card $h={528} $strong>
            <CardHead><h2>标记</h2><Caret w={14} h={7} /></CardHead>
            <SelectFrame>
              <SelectIcon><I w={20} h={20}><rect x="1" y="1" width="17" height="17" stroke="#777" /></I></SelectIcon>
              <select aria-label="标记类型"><option>自动</option></select>
              <SelectCaret><Caret w={14} h={8} /></SelectCaret>
            </SelectFrame>
            <MarkGrid>
              <MarkButton><ColorDots />颜色</MarkButton>
              <MarkButton><SizeIcon />大小</MarkButton>
              <MarkButton><TextBox w={32} h={30} />标签</MarkButton>
              <MarkButton><DetailIcon />详细信息</MarkButton>
              <MarkButton><TipIcon />工具提示</MarkButton>
            </MarkGrid>
            <Pills>
              <PillRow><SizeIcon /><Pill>计数(Sheet1)</Pill></PillRow>
              <PillRow><ColorDots /><Pill $on>总和(累计票..<Caret /></Pill></PillRow>
              <PillRow><TextBox w={28} h={30} /><Pill $dim>第一类型</Pill><Tooltip role="tooltip">累计票房 （万）</Tooltip></PillRow>
            </Pills>
          </Card>
        </Cards>

        <Workspace>
          <Shelf><ShelfName><I w={24} h={24}><path d="M4 0v4M12 0v4M20 0v4M4 6v18M12 6v18M20 6v18" strokeWidth="4" /></I><span>列</span></ShelfName></Shelf>
          <Shelf><ShelfName><I w={24} h={24}><path d="M0 4h4M0 12h4M0 20h4M6 4h18M6 12h18M6 20h18" strokeWidth="4" /></I><span>行</span></ShelfName></Shelf>
          <Sheet>
            <SheetTitle>工作表 8</SheetTitle>
            <TreeMap>{renderNode(genres)}</TreeMap>
            <SheetFoot />
          </Sheet>
        </Workspace>
      </Main>

      <SheetTabs>
        <SourceTab><I w={16} h={24}><ellipse cx="8" cy="5" rx="6.500" ry="3.500" /><path d="M1.500 5v14c0 5 13 5 13 0V5" /></I>数据源</SourceTab>
        {["工作表 1", "电影票房折线图", "工作表 3", "工作表 4", "工作表 5", "工作表 6", "工作表 7"].map((n) => <SheetTab key={n}>{n}</SheetTab>)}
        <SheetTab $on>工作表 8</SheetTab>
        <AddTab aria-label="新建工作表"><I w={30} h={30}><path d="M14 22H2V2h20v14M7 12v5M12 8v9M17 11v5" /><Plus x={23} y={23} s={7} w={4} c="#666" /></I></AddTab>
        <AddTab aria-label="新建仪表板"><I w={30} h={30}><path d="M14 22H2V2h21v14M2 12h20M12 2v20" /><Plus x={23} y={23} s={7} w={4} c="#666" /></I></AddTab>
        <AddTab aria-label="新建故事"><I w={30} h={30}><path d="M12 25 2 21V2l10 4 10-4v14M12 6v19" /><Plus x={23} y={23} s={7} w={4} c="#666" /></I></AddTab>
      </SheetTabs>
      <Status>
        <Facts><span>25 个标记</span><span>1 行依据1 列</span><span>总和(累计票房 （万）): 17,516,896</span></Facts>
        <StatusCell $w={255} />
        <StatusCell $w={54} />
        <StatusCell $w={54} />
        <StatusCell $w={94} />
        <StatusCell $w={142}>
          <button aria-label="第一页"><NavIcon end /></button>
          <button aria-label="上一页"><NavIcon /></button>
          <button aria-label="下一页"><NavIcon flip /></button>
          <button aria-label="最后一页"><NavIcon flip end /></button>
        </StatusCell>
        <StatusCell $w={153}>
          <button aria-label="缩略图"><I w={22} h={22}><g fill="currentColor" stroke="none">{[0, 8, 16].flatMap((y) => [0, 8, 16].map((x) => <rect key={`${x}-${y}`} x={x} y={y} width="6" height="6" />))}</g></I></button>
          <button aria-label="幻灯片"><I w={22} h={22}><path d="M0 0h22v14H0zM0 16h6v6H0zM8 16h6v6H8zM16 16h6v6h-6z" fill="currentColor" stroke="none" /></I></button>
          <button aria-label="标签视图"><I w={22} h={22}><rect width="22" height="22" rx="1" fill="#666" stroke="none" /></I></button>
        </StatusCell>
      </Status>

      <ShowMe>
        <ShowMeTab>
          <svg width="32" height="38" viewBox="0 0 32 38" aria-hidden="true"><R c="#877199" d={[[0, 4, 25, 6]]} /><R c="#85a6cc" d={[[0, 12, 32, 6]]} /><R c="#f2a67c" d={[[0, 20, 13, 6]]} /><R c="#f9727f" d={[[0, 28, 19, 6]]} /></svg>
          智能推荐
        </ShowMeTab>
        <ShowMeBody>
          <Thumbs>
            {thumbs.map(([name, art]) => (
              <Thumb key={name} $on={name === "散点图"} aria-label={name}>
                <svg width="108" height="80" viewBox="0 0 324 240">{art}</svg>
              </Thumb>
            ))}
          </Thumbs>
          <Hint>对于散点图，尝试</Hint>
          <Hint>0 个或多个<HintPill $dim>维度</HintPill></Hint>
          <Hint>2 至 4 个<HintPill>度量</HintPill></Hint>
        </ShowMeBody>
      </ShowMe>
      <Watermark>https://blog.csdn.net/qq_39633239</Watermark>
    </Page>
  );
}
